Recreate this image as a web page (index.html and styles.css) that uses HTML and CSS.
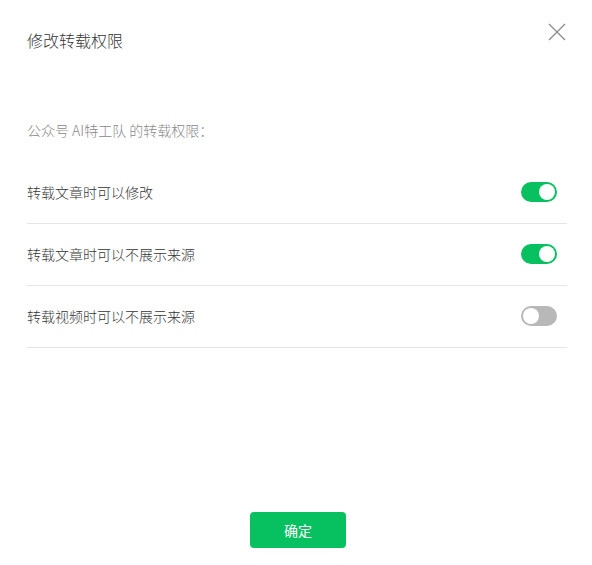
FILE: index.html
```html
<!DOCTYPE html>
<html lang="zh-CN">
<head>
    <meta charset="UTF-8">
    <meta name="viewport" content="width=device-width, initial-scale=1.0">
    <title>修改转载权限</title>
    <link rel="stylesheet" href="styles.css">
</head>
<body>

    <div class="dialog">
        <div class="dialog-header">
            <h3 class="dialog-title">修改转载权限</h3>
            <button class="close-btn" aria-label="关闭">
                <svg width="18" height="18" viewBox="0 0 18 18">
                    <path d="M1 1 L17 17 M17 1 L1 17" stroke="#8c8c8c" stroke-width="1.3" fill="none"/>
                </svg>
            </button>
        </div>

        <p class="dialog-desc">公众号 AI特工队 的转载权限：</p>

        <ul class="setting-list">
            <li class="setting-item">
                <span>转载文章时可以修改</span>
                <span class="switch on"></span>
            </li>
            <li class="setting-item">
                <span>转载文章时可以不展示来源</span>
                <span class="switch on"></span>
            </li>
            <li class="setting-item">
                <span>转载视频时可以不展示来源</span>
                <span class="switch"></span>
            </li>
        </ul>

        <div class="dialog-footer">
            <button class="confirm-btn">确定</button>
        </div>
    </div>

</body>
</html>
```

FILE: styles.css
```css
body {
    margin: 0;
    padding: 0;
    background: #ffffff;
    font-family: "Noto Sans CJK SC", "Liberation Sans", sans-serif;
    font-weight: 300;
    color: #353535;
}

.dialog {
    position: relative;
    display: flex;
    flex-direction: column;
    min-height: 100vh;
    box-sizing: border-box;
    padding: 0 25px 17px 27px;
}

.dialog-header {
    padding-top: 28px;
}

.dialog-title {
    margin: 0;
    font-size: 16px;
    font-weight: 300;
    line-height: 24px;
    color: #353535;
}

.close-btn {
    position: absolute;
    top: 23px;
    right: 26px;
    width: 18px;
    height: 18px;
    padding: 0;
    border: none;
    background: none;
    cursor: pointer;
}

.close-btn svg {
    display: block;
}

.dialog-desc {
    margin: 68px 0 0;
    font-size: 14px;
    line-height: 20px;
    color: #888888;
}

.setting-list {
    list-style: none;
    margin: 22px 0 0;
    padding: 0;
}

.setting-item {
    display: flex;
    align-items: center;
    justify-content: space-between;
    height: 59px;
    padding: 0 10px 2px 0;
    border-bottom: 1px solid #e5e5e5;
    font-size: 14px;
    line-height: 20px;
}

.switch {
    position: relative;
    width: 36px;
    height: 20px;
    border-radius: 10px;
    background: #b8b8b8;
}

.switch::after {
    content: "";
    position: absolute;
    top: 2px;
    left: 2px;
    width: 16px;
    height: 16px;
    border-radius: 50%;
    background: #ffffff;
}

.switch.on {
    background: #07c160;
}

.switch.on::after {
    left: 18px;
}

.dialog-footer {
    margin-top: auto;
    display: flex;
    justify-content: center;
}

.confirm-btn {
    width: 96px;
    height: 36px;
    margin-left: 2px;
    border: none;
    border-radius: 4px;
    background: #07c160;
    color: #ffffff;
    font-family: inherit;
    font-size: 14px;
    font-weight: 400;
    cursor: pointer;
}
```
